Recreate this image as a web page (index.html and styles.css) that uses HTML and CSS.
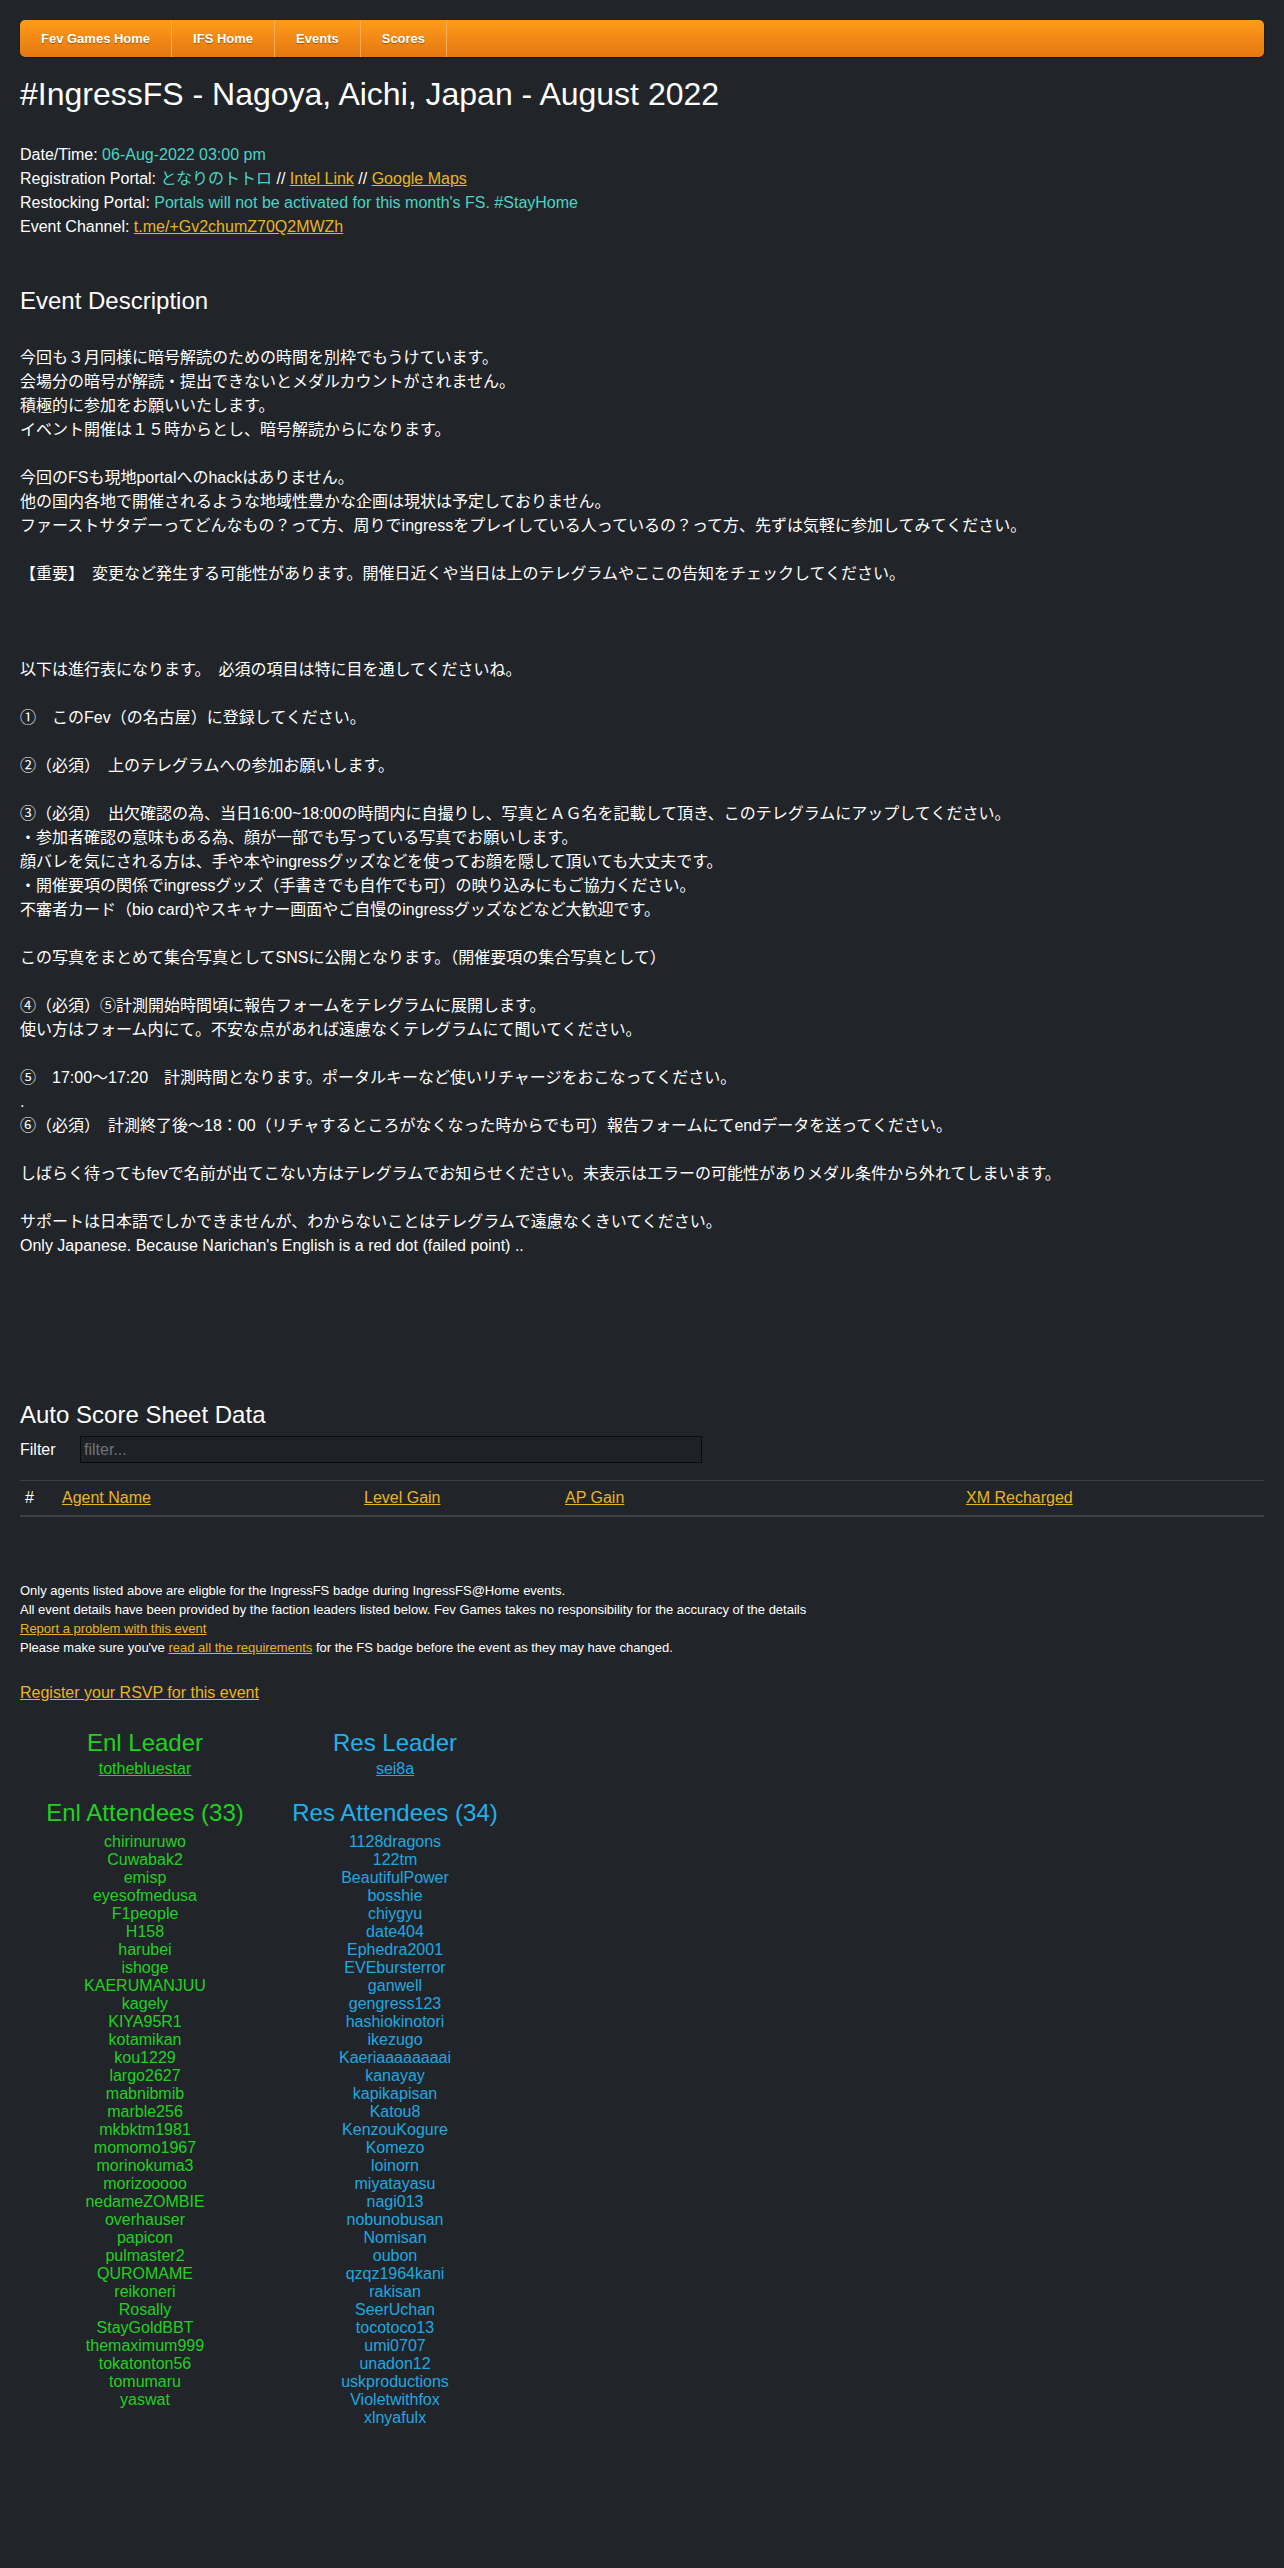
FILE: index.html
```html
<!DOCTYPE html>
<html lang="ja">
<head>
<meta charset="utf-8">
<title>#IngressFS - Nagoya, Aichi, Japan - August 2022</title>
<link rel="stylesheet" href="styles.css">
</head>
<body>
<nav class="topnav">
  <a class="nav-item" href="#">Fev Games Home</a>
  <a class="nav-item" href="#">IFS Home</a>
  <a class="nav-item" href="#">Events</a>
  <a class="nav-item" href="#">Scores</a>
</nav>

<h1 class="title">#IngressFS - Nagoya, Aichi, Japan - August 2022</h1>

<div class="info">
  <div>Date/Time: <span class="teal">06-Aug-2022 03:00 pm</span></div>
  <div>Registration Portal: <span class="teal">となりのトトロ</span> // <a class="link" href="#">Intel Link</a> // <a class="link" href="#">Google Maps</a></div>
  <div>Restocking Portal: <span class="teal">Portals will not be activated for this month's FS. #StayHome</span></div>
  <div>Event Channel: <a class="link" href="#">t.me/+Gv2chumZ70Q2MWZh</a></div>
</div>

<h3 class="section-title desc-title">Event Description</h3>

<div class="description">今回も３月同様に暗号解読のための時間を別枠でもうけています。<br>
会場分の暗号が解読・提出できないとメダルカウントがされません。<br>
積極的に参加をお願いいたします。<br>
イベント開催は１５時からとし、暗号解読からになります。<br>
<br>
今回のFSも現地portalへのhackはありません。<br>
他の国内各地で開催されるような地域性豊かな企画は現状は予定しておりません。<br>
ファーストサタデーってどんなもの？って方、周りでingressをプレイしている人っているの？って方、先ずは気軽に参加してみてください。<br>
<br>
【重要】　変更など発生する可能性があります。開催日近くや当日は上のテレグラムやここの告知をチェックしてください。<br>
<br>
<br>
<br>
以下は進行表になります。　必須の項目は特に目を通してくださいね。<br>
<br>
①　このFev（の名古屋）に登録してください。<br>
<br>
②（必須）　上のテレグラムへの参加お願いします。<br>
<br>
③（必須）　出欠確認の為、当日16:00~18:00の時間内に自撮りし、写真とＡＧ名を記載して頂き、このテレグラムにアップしてください。<br>
・参加者確認の意味もある為、顔が一部でも写っている写真でお願いします。<br>
顔バレを気にされる方は、手や本やingressグッズなどを使ってお顔を隠して頂いても大丈夫です。<br>
・開催要項の関係でingressグッズ（手書きでも自作でも可）の映り込みにもご協力ください。<br>
不審者カード（bio card)やスキャナー画面やご自慢のingressグッズなどなど大歓迎です。<br>
<br>
この写真をまとめて集合写真としてSNSに公開となります。（開催要項の集合写真として）<br>
<br>
④（必須）⑤計測開始時間頃に報告フォームをテレグラムに展開します。<br>
使い方はフォーム内にて。不安な点があれば遠慮なくテレグラムにて聞いてください。<br>
<br>
⑤　17:00～17:20　計測時間となります。ポータルキーなど使いリチャージをおこなってください。<br>
.<br>
⑥（必須）　計測終了後～18：00（リチャするところがなくなった時からでも可）報告フォームにてendデータを送ってください。<br>
<br>
しばらく待ってもfevで名前が出てこない方はテレグラムでお知らせください。未表示はエラーの可能性がありメダル条件から外れてしまいます。<br>
<br>
サポートは日本語でしかできませんが、わからないことはテレグラムで遠慮なくきいてください。<br>
Only Japanese. Because Narichan's English is a red dot (failed point) ..</div>

<h3 class="section-title score-title">Auto Score Sheet Data</h3>

<div class="filter-row">
  <label class="filter-label" for="filter">Filter</label>
  <input class="filter-input" id="filter" type="text" placeholder="filter...">
</div>

<table class="score-table">
  <colgroup>
    <col class="c-num"><col class="c-agent"><col class="c-level"><col class="c-ap"><col class="c-xm">
  </colgroup>
  <thead>
    <tr>
      <th>#</th>
      <th><a class="link" href="#">Agent Name</a></th>
      <th><a class="link" href="#">Level Gain</a></th>
      <th><a class="link" href="#">AP Gain</a></th>
      <th><a class="link" href="#">XM Recharged</a></th>
    </tr>
  </thead>
  <tbody></tbody>
</table>

<div class="notes">
  <div>Only agents listed above are eligble for the IngressFS badge during IngressFS@Home events.</div>
  <div>All event details have been provided by the faction leaders listed below. Fev Games takes no responsibility for the accuracy of the details</div>
  <div><a class="link" href="#">Report a problem with this event</a></div>
  <div>Please make sure you've <a class="link" href="#">read all the requirements</a> for the FS badge before the event as they may have changed.</div>
</div>

<div class="rsvp"><a class="link" href="#">Register your RSVP for this event</a></div>

<div class="factions">
  <div class="faction enl">
    <h4 class="fac-head">Enl Leader</h4>
    <a class="leader" href="#">tothebluestar</a>
    <h4 class="fac-head att-head">Enl Attendees (33)</h4>
    <ul class="names">
      <li>chirinuruwo</li><li>Cuwabak2</li><li>emisp</li><li>eyesofmedusa</li><li>F1people</li><li>H158</li><li>harubei</li><li>ishoge</li><li>KAERUMANJUU</li><li>kagely</li><li>KIYA95R1</li><li>kotamikan</li><li>kou1229</li><li>largo2627</li><li>mabnibmib</li><li>marble256</li><li>mkbktm1981</li><li>momomo1967</li><li>morinokuma3</li><li>morizooooo</li><li>nedameZOMBIE</li><li>overhauser</li><li>papicon</li><li>pulmaster2</li><li>QUROMAME</li><li>reikoneri</li><li>Rosally</li><li>StayGoldBBT</li><li>themaximum999</li><li>tokatonton56</li><li>tomumaru</li><li>yaswat</li>
    </ul>
  </div>
  <div class="faction res">
    <h4 class="fac-head">Res Leader</h4>
    <a class="leader" href="#">sei8a</a>
    <h4 class="fac-head att-head">Res Attendees (34)</h4>
    <ul class="names">
      <li>1128dragons</li><li>122tm</li><li>BeautifulPower</li><li>bosshie</li><li>chiygyu</li><li>date404</li><li>Ephedra2001</li><li>EVEbursterror</li><li>ganwell</li><li>gengress123</li><li>hashiokinotori</li><li>ikezugo</li><li>Kaeriaaaaaaaai</li><li>kanayay</li><li>kapikapisan</li><li>Katou8</li><li>KenzouKogure</li><li>Komezo</li><li>loinorn</li><li>miyatayasu</li><li>nagi013</li><li>nobunobusan</li><li>Nomisan</li><li>oubon</li><li>qzqz1964kani</li><li>rakisan</li><li>SeerUchan</li><li>tocotoco13</li><li>umi0707</li><li>unadon12</li><li>uskproductions</li><li>Violetwithfox</li><li>xlnyafulx</li>
    </ul>
  </div>
</div>
</body>
</html>
```

FILE: styles.css
```css
html, body {
  background: #212529;
}
body {
  margin: 0;
  padding: 20px 20px 60px 20px;
  color: #ffffff;
  font-family: "Liberation Sans", Arial, "Noto Sans CJK JP", sans-serif;
  font-size: 16px;
  line-height: 24px;
}

.topnav {
  display: flex;
  height: 37px;
  border-radius: 5px;
  background: linear-gradient(to bottom, #fd9c18 0%, #f28916 50%, #e4780f 100%);
  box-shadow: 0 1px 2px rgba(0, 0, 0, 0.45);
}
.nav-item {
  display: flex;
  align-items: center;
  padding: 0 21px;
  border-right: 1px solid #f8ac55;
  color: #ffffff;
  font-size: 13px;
  font-weight: bold;
  text-decoration: none;
  text-shadow: 0 1px 1px rgba(0, 0, 0, 0.35);
}

.title {
  margin: 18px 0 0 0;
  font-size: 32px;
  line-height: 38px;
  font-weight: normal;
}

.info {
  margin-top: 30px;
}
.teal {
  color: #4ad3c4;
}
.link {
  color: #e9b51f;
  text-decoration: underline;
}

.section-title {
  margin: 0;
  font-size: 24px;
  line-height: 29px;
  font-weight: normal;
}
.desc-title {
  margin-top: 47px;
}
.description {
  margin-top: 31px;
  line-height: 24px;
}
.score-title {
  margin-top: 142px;
}

.filter-row {
  display: flex;
  align-items: center;
  margin-top: 7px;
  height: 27px;
}
.filter-label {
  width: 60px;
}
.filter-input {
  box-sizing: border-box;
  width: 622px;
  height: 27px;
  margin: 0;
  padding: 0 3px;
  border: 1px solid #0b0c0d;
  background: #1e2125;
  color: #ffffff;
  font-family: "Liberation Sans", Arial, sans-serif;
  font-size: 16px;
  outline: none;
}
.filter-input::placeholder {
  color: #6f747a;
}

.score-table {
  margin-top: 17px;
  width: 1244px;
  border-collapse: collapse;
  table-layout: fixed;
}
.c-num { width: 37px; }
.c-agent { width: 302px; }
.c-level { width: 201px; }
.c-ap { width: 401px; }
.c-xm { width: 303px; }
.score-table th {
  height: 34px;
  padding: 0 0 0 5px;
  text-align: left;
  font-weight: normal;
  border-top: 1px solid #3a3f45;
  border-bottom: 2px solid #3c4248;
  vertical-align: middle;
}

.notes {
  margin-top: 64px;
  font-size: 13px;
  line-height: 19px;
}

.rsvp {
  margin-top: 24px;
}

.factions {
  display: flex;
  margin-top: 23px;
}
.faction {
  width: 250px;
  display: flex;
  flex-direction: column;
  align-items: center;
  text-align: center;
}
.fac-head {
  margin: 0;
  font-size: 24px;
  line-height: 29px;
  font-weight: normal;
}
.att-head {
  margin-top: 17px;
}
.leader {
  text-decoration: underline;
}
.names {
  list-style: none;
  margin: 6px 0 0 0;
  padding: 0;
  line-height: 18px;
}
.enl, .enl .leader {
  color: #1fd21f;
}
.res, .res .leader {
  color: #1fa8e0;
}
.res .fac-head {
  color: #22b0ea;
}
```
